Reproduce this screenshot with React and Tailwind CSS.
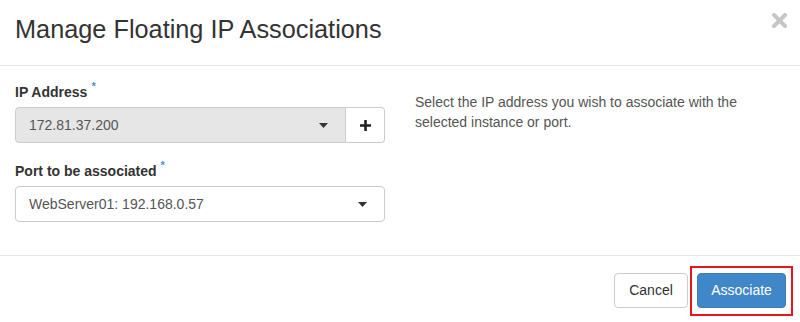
import React from "react";

function Caret() {
  return (
    <svg width="9" height="5" viewBox="0 0 9 5" className="shrink-0">
      <path d="M0 0 L9 0 L4.5 5 Z" fill="#333" />
    </svg>
  );
}

function Req() {
  return (
    <span className="relative top-[-7px] text-[#4a90d9] text-[11px] leading-none ml-[4px] font-bold">*</span>
  );
}

export default function App() {
  const font = { fontFamily: '"Liberation Sans", Arial, sans-serif' };
  return (
    <div className="w-[800px] h-[322px] bg-white overflow-hidden text-[14px] text-[#333]" style={font}>
      {/* Header */}
      <div className="h-[66px] border-b border-[#e5e5e5] flex items-start justify-between pl-[15px] pr-[13px]">
        <h4 className="text-[25.3px] leading-[26px] font-normal text-[#333] mt-[16px]">
          Manage Floating IP Associations
        </h4>
        <button className="mt-[13px]" aria-label="Close">
          <svg width="15" height="15" viewBox="0 0 15 15">
            <path d="M2 2 L13 13 M13 2 L2 13" stroke="#c6c6c6" strokeWidth="4" strokeLinecap="square" />
          </svg>
        </button>
      </div>

      {/* Body */}
      <div className="h-[189px] flex px-[15px] pt-[16px]">
        <div className="w-[370px]">
          <div className="mb-[18px]">
            <label className="block h-[20px] leading-[20px] font-bold mb-[5px]">
              IP Address
              <Req />
            </label>
            <div className="flex h-[36px]">
              <div className="flex-1 flex items-center justify-between bg-[#e6e6e6] border border-[#ccc] rounded-l-[4px] pl-[13px] pr-[17px] text-[#555]">
                <span>172.81.37.200</span>
                <Caret />
              </div>
              <div className="w-[39px] flex items-center justify-center bg-white border border-l-0 border-[#ccc] rounded-r-[4px]">
                <svg width="11" height="11" viewBox="0 0 11 11">
                  <path d="M5.5 0 V11 M0 5.5 H11" stroke="#222" strokeWidth="2.6" />
                </svg>
              </div>
            </div>
          </div>
          <div>
            <label className="block h-[20px] leading-[20px] font-bold mb-[5px]">
              Port to be associated
              <Req />
            </label>
            <div className="flex items-center justify-between h-[36px] bg-white border border-[#ccc] rounded-[4px] pl-[13px] pr-[17px] text-[#555]">
              <span>WebServer01: 192.168.0.57</span>
              <Caret />
            </div>
          </div>
        </div>
        <div className="w-[370px] ml-[30px] pt-[10px]">
          <p className="leading-[20px] text-[#555]">
            Select the IP address you wish to associate with the selected instance or port.
          </p>
        </div>
      </div>

      {/* Footer */}
      <div className="border-t border-[#e5e5e5] flex justify-end items-start pt-[10px] pr-[7px]">
        <button className="mt-[7px] h-[35px] px-[12px] bg-white border border-[#ccc] rounded-[4px] text-[#333] text-[14px] w-[74px] mr-[2px]">
          Cancel
        </button>
        <div className="border-2 border-[#e8141b] p-[5px] h-[50px] flex items-start">
          <button className="h-[35px] w-[89px] bg-[#3f87c9] border border-[#3a7cbb] rounded-[4px] text-white text-[14px]">
            Associate
          </button>
        </div>
      </div>
    </div>
  );
}
